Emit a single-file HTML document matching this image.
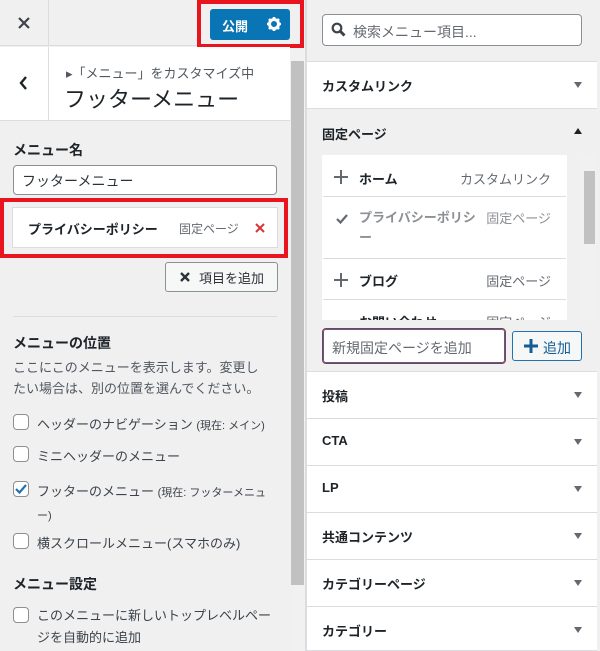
<!DOCTYPE html>
<html><head><meta charset="utf-8"><style>
*{box-sizing:border-box;margin:0;padding:0}
body{width:600px;height:651px;overflow:hidden;background:#f0f0f1;font-family:"Liberation Sans","Noto Sans CJK JP",sans-serif;color:#1d2327;position:relative;font-size:13px}
.abs{position:absolute}
.sec{position:absolute;left:307px;width:290px;background:#fff;border-bottom:1px solid #dcdcde;height:47px}
.sec span{position:absolute;left:15px;top:14px;font-size:13px;font-weight:bold}
.sec i{position:absolute;right:15px;top:20px;width:0;height:0;border-left:4px solid transparent;border-right:4px solid transparent;border-top:6px solid #646970}
.cb{position:absolute;left:13px;width:16px;height:16px;border:1px solid #8c8f94;border-radius:4px;background:#fff}
.lbl{position:absolute;left:37px;font-size:13px;color:#3c434a}
.it{position:absolute;left:323px;width:243px;background:#fff;border-bottom:1px solid #dcdcde}
.plus{position:absolute;left:10px;top:13px}
</style></head><body>
<div class="abs" style="left:0;top:0;width:290px;height:46px;background:#f0f0f1;border-bottom:1px solid #dcdcde"></div>
<div class="abs" style="left:48px;top:0;width:1px;height:46px;background:#dcdcde"></div>
<svg class="abs" style="left:18px;top:17px" width="12" height="12" viewBox="0 0 12 12"><path d="M1 1L11 11M11 1L1 11" stroke="#3c434a" stroke-width="2.2"/></svg>
<div class="abs" style="left:210px;top:9px;width:80px;height:31px;background:#0a75b5;border-radius:3px"></div>
<div class="abs" style="left:222px;top:16px;color:#fff;font-size:13px;font-weight:bold">公開</div>
<svg class="abs" style="left:267px;top:17px" width="14" height="14" viewBox="0 0 14 14"><circle cx="7" cy="7" r="4.5" fill="none" stroke="#fff" stroke-width="3"/><g stroke="#fff" stroke-width="2.6"><path d="M7 0v3M7 11v3M0 7h3M11 7h3M2 2l2 2M10 10l2 2M12 2l-2 2M2 12l2-2"/></g></svg>
<div class="abs" style="left:197px;top:0;width:107px;height:48px;border:4px solid #e8141e"></div>
<div class="abs" style="left:0;top:47px;width:290px;height:74px;background:#fff;border-bottom:1px solid #dcdcde"></div>
<div class="abs" style="left:48px;top:47px;width:1px;height:74px;background:#dcdcde"></div>
<svg class="abs" style="left:19px;top:76px" width="9" height="14" viewBox="0 0 9 14"><path d="M7 1L2 7L7 13" fill="none" stroke="#1d2327" stroke-width="2.4"/></svg>
<div class="abs" style="left:66px;top:63px;font-size:13px;color:#50575e">▸「メニュー」をカスタマイズ中</div>
<div class="abs" style="left:64px;top:82px;font-size:22px;color:#1d2327">フッターメニュー</div>
<div class="abs" style="left:13px;top:140px;font-size:14px;font-weight:bold;color:#1d2327">メニュー名</div>
<div class="abs" style="left:13px;top:165px;width:264px;height:30px;background:#fff;border:1px solid #8c8f94;border-radius:4px;padding:5px 8px;font-size:14px;color:#2c3338">フッターメニュー</div>
<div class="abs" style="left:12px;top:207px;width:266px;height:41px;background:#fff;border:1px solid #dcdcde"></div>
<div class="abs" style="left:28px;top:219px;font-size:13px;font-weight:bold">プライバシーポリシー</div>
<div class="abs" style="left:179px;top:220px;font-size:12px;color:#646970">固定ページ</div>
<svg class="abs" style="left:255px;top:223px" width="10" height="10" viewBox="0 0 10 10"><path d="M1 1L9 9M9 1L1 9" stroke="#d63638" stroke-width="2"/></svg>
<div class="abs" style="left:0;top:198px;width:288px;height:60px;border:4px solid #e8141e"></div>
<div class="abs" style="left:165px;top:262px;width:113px;height:30px;background:#f6f7f7;border:1px solid #8c8f94;border-radius:3px"></div>
<svg class="abs" style="left:180px;top:272px" width="10" height="10" viewBox="0 0 10 10"><path d="M1 1L9 9M9 1L1 9" stroke="#2c3338" stroke-width="2.4"/></svg>
<div class="abs" style="left:199px;top:268px;font-size:13px;color:#2c3338">項目を追加</div>
<div class="abs" style="left:13px;top:316px;width:264px;height:1px;background:#dcdcde"></div>
<div class="abs" style="left:13px;top:333px;font-size:14px;font-weight:bold">メニューの位置</div>
<div class="abs" style="left:13px;top:357px;font-size:13px;line-height:21px;color:#50575e;width:255px">ここにこのメニューを表示します。変更したい場合は、別の位置を選んでください。</div>
<div class="cb" style="top:414px"></div><div class="lbl" style="top:414px">ヘッダーのナビゲーション <small style="font-size:11px">(現在: メイン)</small></div>
<div class="cb" style="top:446px"></div><div class="lbl" style="top:446px">ミニヘッダーのメニュー</div>
<div class="cb" style="top:481px"></div><svg class="abs" style="left:15px;top:484px" width="12" height="10" viewBox="0 0 12 10"><path d="M1 5L4.5 8.5L11 1" fill="none" stroke="#2271b1" stroke-width="2.2"/></svg>
<div class="lbl" style="top:481px;width:240px;line-height:21px">フッターのメニュー <small style="font-size:11px">(現在: フッターメニュー)</small></div>
<div class="cb" style="top:533px"></div><div class="lbl" style="top:533px">横スクロールメニュー(スマホのみ)</div>
<div class="abs" style="left:13px;top:574px;font-size:14px;font-weight:bold">メニュー設定</div>
<div class="cb" style="top:607px"></div><div class="lbl" style="top:605px;width:240px;line-height:22px">このメニューに新しいトップレベルページを自動的に追加</div>
<div class="abs" style="left:290px;top:48px;width:15px;height:603px;background:#f1f1f1"></div>
<div class="abs" style="left:291px;top:61px;width:13px;height:524px;background:#c1c1c1"></div>
<div class="abs" style="left:305px;top:0;width:2px;height:651px;background:#dcdcde"></div>
<div class="abs" style="left:322px;top:14px;width:260px;height:32px;background:#fff;border:1px solid #8c8f94;border-radius:4px"></div>
<svg class="abs" style="left:331px;top:22px" width="15" height="15" viewBox="0 0 15 15"><circle cx="6" cy="6" r="4.3" fill="none" stroke="#3c434a" stroke-width="2.2"/><path d="M9 9L13.5 13.5" stroke="#3c434a" stroke-width="3"/></svg>
<div class="abs" style="left:353px;top:22px;font-size:14px;color:#646970">検索メニュー項目...</div>
<div class="abs" style="left:307px;top:61px;width:290px;height:1px;background:#dcdcde"></div>
<div class="sec" style="top:62px"><span>カスタムリンク</span><i></i></div>
<div class="abs" style="left:322px;top:124px;font-size:13px;font-weight:bold">固定ページ</div>
<div class="abs" style="left:574px;top:128px;width:0;height:0;border-left:4px solid transparent;border-right:4px solid transparent;border-bottom:6px solid #1d2327"></div>
<div class="abs" style="left:322px;top:155px;width:245px;height:165px;background:#fff;overflow:hidden"></div>
<div class="it" style="top:156px;height:41px"><svg class="plus" width="16" height="16" viewBox="0 0 16 16"><path d="M8 1v14M1 8h14" stroke="#646970" stroke-width="2"/></svg><b class="abs" style="left:36px;top:13px">ホーム</b><span class="abs" style="right:15px;top:13px;color:#646970">カスタムリンク</span></div>
<div class="it" style="top:197px;height:62px"><svg class="abs" style="left:13px;top:17px" width="12" height="10" viewBox="0 0 12 10"><path d="M1 5L4.5 8.5L11 1" fill="none" stroke="#646970" stroke-width="2.2"/></svg><span class="abs" style="left:36px;top:11px;width:120px;line-height:20px;color:#8c8f94;font-weight:bold">プライバシーポリシー</span><span class="abs" style="right:15px;top:11px;color:#8c8f94">固定ページ</span></div>
<div class="it" style="top:259px;height:41px"><svg class="plus" width="16" height="16" viewBox="0 0 16 16"><path d="M8 1v14M1 8h14" stroke="#646970" stroke-width="2"/></svg><b class="abs" style="left:36px;top:12px">ブログ</b><span class="abs" style="right:15px;top:12px;color:#646970">固定ページ</span></div>
<div class="it" style="top:300px;height:20px;overflow:hidden;border:none"><b class="abs" style="left:36px;top:12px">お問い合わせ</b><span class="abs" style="right:15px;top:12px;color:#646970">固定ページ</span></div>
<div class="abs" style="left:582px;top:155px;width:14px;height:165px;background:#f1f1f1"></div>
<div class="abs" style="left:584px;top:171px;width:11px;height:73px;background:#c1c1c1"></div>
<div class="abs" style="left:322px;top:328px;width:184px;height:36px;background:#fff;border:1px solid #b32d2e;border-radius:4px;box-shadow:0 0 0 1px #2271b1 inset"></div>
<div class="abs" style="left:332px;top:338px;font-size:14px;color:#646970">新規固定ページを追加</div>
<div class="abs" style="left:512px;top:331px;width:70px;height:30px;background:#f6f7f7;border:1px solid #2271b1;border-radius:3px"></div>
<svg class="abs" style="left:524px;top:339px" width="14" height="14" viewBox="0 0 14 14"><path d="M7 0v14M0 7h14" stroke="#135e96" stroke-width="3"/></svg>
<div class="abs" style="left:543px;top:338px;font-size:14px;color:#135e96">追加</div>
<div class="abs" style="left:307px;top:371px;width:290px;height:1px;background:#dcdcde"></div>
<div class="sec" style="top:372px"><span>投稿</span><i></i></div>
<div class="sec" style="top:419px"><span>CTA</span><i></i></div>
<div class="sec" style="top:466px"><span>LP</span><i></i></div>
<div class="sec" style="top:513px"><span>共通コンテンツ</span><i></i></div>
<div class="sec" style="top:560px"><span>カテゴリーページ</span><i></i></div>
<div class="sec" style="top:607px;height:44px"><span>カテゴリー</span><i></i></div>
</body></html>
